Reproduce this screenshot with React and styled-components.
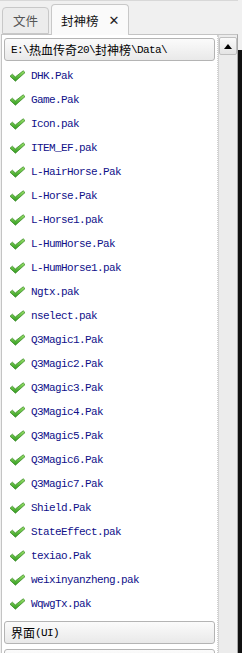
import React from "react";
import styled, { createGlobalStyle } from "styled-components";

const GlobalStyle = createGlobalStyle`
  html, body {
    margin: 0;
    padding: 0;
    background: #f0f0f0;
  }
`;

const files = [
  "DHK.Pak",
  "Game.Pak",
  "Icon.pak",
  "ITEM_EF.pak",
  "L-HairHorse.Pak",
  "L-Horse.Pak",
  "L-Horse1.pak",
  "L-HumHorse.Pak",
  "L-HumHorse1.pak",
  "Ngtx.pak",
  "nselect.pak",
  "Q3Magic1.Pak",
  "Q3Magic2.Pak",
  "Q3Magic3.Pak",
  "Q3Magic4.Pak",
  "Q3Magic5.Pak",
  "Q3Magic6.Pak",
  "Q3Magic7.Pak",
  "Shield.Pak",
  "StateEffect.pak",
  "texiao.Pak",
  "weixinyanzheng.pak",
  "WqwgTx.pak",
];

const mono = `"Liberation Mono", "Noto Sans Mono CJK SC", "Noto Sans CJK SC", monospace`;

function CheckIcon() {
  return (
    <svg width="17" height="12" viewBox="0 0 17 12">
      <defs>
        <linearGradient id="ck" x1="0" y1="0" x2="0" y2="1">
          <stop offset="0" stopColor="#9be46a" />
          <stop offset="1" stopColor="#2f9a1e" />
        </linearGradient>
      </defs>
      <path
        d="M1 6.2 L3.4 4.2 L6.3 7 L14.2 0.8 L16 2.6 L6.4 11.2 Z"
        fill="url(#ck)"
        stroke="#3c8a2a"
        strokeWidth="0.8"
        strokeLinejoin="round"
      />
    </svg>
  );
}

function App() {
  return (
    <>
      <GlobalStyle />
      <Screen>
        <Main>
          <TabRow>
            <Tab>文件</Tab>
            <Tab $active>
              封神榜
              <Close>✕</Close>
            </Tab>
          </TabRow>
          <Panel>
            <Content>
              <Bar $top>
                E:\<Cjk>热血传奇</Cjk>20\<Cjk>封神榜</Cjk>\Data\
              </Bar>
              <List>
                {files.map((f) => (
                  <Item key={f}>
                    <CheckIcon />
                    <FileName>{f}</FileName>
                  </Item>
                ))}
              </List>
              <Bar>
                <Cjk>界面</Cjk>(UI)
              </Bar>
              <Bar>
                <Cjk>游戏道具</Cjk>(Items)
              </Bar>
            </Content>
            <ScrollBar>
              <ArrowButton>
                <svg width="8" height="5" viewBox="0 0 8 5">
                  <path d="M0 5 L4 0 L8 5 Z" fill="#000" />
                </svg>
              </ArrowButton>
            </ScrollBar>
          </Panel>
        </Main>
        <Edge />
      </Screen>
    </>
  );
}

const Screen = styled.div`
  display: flex;
  width: 242px;
  height: 653px;
  overflow: hidden;
  background: #f0f0f0;
`;

const Main = styled.div`
  width: 238px;
  display: flex;
  flex-direction: column;
`;

const Edge = styled.div`
  width: 4px;
  margin-top: 50px;
  background: #111;
`;

const TabRow = styled.div`
  display: flex;
  align-items: flex-end;
  height: 34px;
  padding-left: 2px;
  gap: 2px;
  border-top: 1px solid #d8d8d8;
  box-sizing: border-box;
`;

const Tab = styled.div`
  display: flex;
  align-items: center;
  box-sizing: border-box;
  height: ${(p) => (p.$active ? "31px" : "27px")};
  padding: 0 ${(p) => (p.$active ? "9px" : "10px")};
  margin-bottom: ${(p) => (p.$active ? "-1px" : "0")};
  background: ${(p) => (p.$active ? "#fafafa" : "#ececec")};
  border: 1px solid #c8c8c8;
  border-bottom: ${(p) => (p.$active ? "none" : "1px solid #c8c8c8")};
  border-radius: 4px 4px 0 0;
  font-family: "Noto Sans CJK SC", sans-serif;
  font-size: 12.5px;
  color: ${(p) => (p.$active ? "#111" : "#555")};
  position: relative;
  z-index: ${(p) => (p.$active ? 1 : 0)};
`;

const Close = styled.span`
  margin-left: 10px;
  font-size: 13px;
  font-weight: bold;
  font-family: "DejaVu Sans", sans-serif;
  color: #222;
`;

const Panel = styled.div`
  flex: 1;
  display: flex;
  border: 1px solid #c4c4c4;
  border-bottom: none;
  border-right: 1px solid #a8a8a8;
  margin-left: 1px;
  background: #fff;
  min-height: 0;
`;

const Content = styled.div`
  flex: 1;
  display: flex;
  flex-direction: column;
  padding: 3px 2px 0 2px;
  min-width: 0;
  border-right: 1px dotted #d0d0d0;
`;

const Bar = styled.div`
  flex-shrink: 0;
  height: 23px;
  box-sizing: border-box;
  margin: ${(p) => (p.$top ? "0 0 3px 0" : "5px 0 0 0")};
  padding-left: 6px;
  display: flex;
  align-items: center;
  border: 1px solid #b4b4b4;
  border-radius: 3px;
  background: linear-gradient(#fbfbfb, #e9e9e9);
  font-family: ${mono};
  font-size: 11px;
  letter-spacing: -0.6px;
  color: #000;
  white-space: nowrap;
`;

const Cjk = styled.span`
  font-family: "Noto Sans CJK SC", sans-serif;
  font-size: 12px;
  letter-spacing: 0;
`;

const List = styled.div`
  display: flex;
  flex-direction: column;
`;

const Item = styled.div`
  display: flex;
  align-items: center;
  height: 24px;
  padding-left: 5px;
  gap: 5px;
`;

const FileName = styled.span`
  font-family: ${mono};
  font-size: 11px;
  letter-spacing: -0.6px;
  color: #10108a;
  white-space: nowrap;
`;

const ScrollBar = styled.div`
  width: 18px;
  flex-shrink: 0;
  display: flex;
  flex-direction: column;
  background: #ececec;
  border-left: 1px solid #d4d4d4;
  padding-top: 2px;
`;

const ArrowButton = styled.div`
  height: 16px;
  display: flex;
  align-items: center;
  justify-content: center;
  background: linear-gradient(#fafafa, #e4e4e4);
  border: 1px solid #c0c0c0;
  border-radius: 2px;
`;

export default App;
